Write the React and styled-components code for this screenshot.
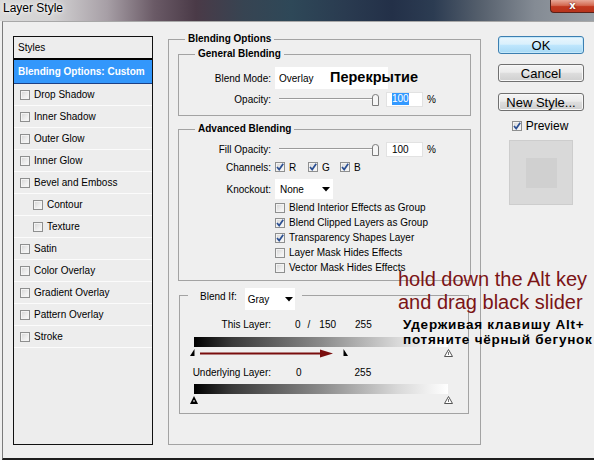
import React from "react";
import styled, { createGlobalStyle } from "styled-components";

const GlobalStyle = createGlobalStyle`
  * { box-sizing: border-box; }
  html, body { margin: 0; padding: 0; background: #efefef; }
  body {
    font-family: "Liberation Sans", Arial, sans-serif;
    font-size: 10px;
    color: #000;
  }
`;

const Window = styled.div`
  position: relative;
  width: 594px;
  height: 460px;
  overflow: hidden;
  display: flex;
  flex-direction: column;
  background: #efefef;
`;

const TitleBar = styled.div`
  flex: none;
  height: 21px;
  display: flex;
  justify-content: space-between;
  align-items: flex-start;
  background: linear-gradient(
    90deg,
    #dadada 0%,
    #d2d1d2 9%,
    #a79fa6 18%,
    #6a5a66 26%,
    #4a3a47 33%,
    #374452 41%,
    #2e4858 49%,
    #2a3b50 58%,
    #233048 66%,
    #2c3c52 73%,
    #56606d 81%,
    #848b94 90%,
    #9aa0a6 100%
  );
`;

const Title = styled.div`
  padding: 1px 0 0 3px;
  font-family: "Liberation Sans", Arial, sans-serif;
  font-size: 12px;
  line-height: 14px;
  color: #000;
  text-shadow: 0 0 6px #fff, 0 0 3px #fff;
`;

const CloseButton = styled.div`
  width: 44px;
  height: 13px;
  display: flex;
  align-items: center;
  justify-content: center;
  border: 1px solid #5a2018;
  border-top: none;
  border-right: none;
  border-bottom-left-radius: 4px;
  background: linear-gradient(180deg, #e7a898 0%, #d46a52 45%, #c2381f 55%, #b8341c 100%);
  color: #fff;
  font-family: "DejaVu Sans", sans-serif;
  font-weight: bold;
  font-size: 10px;
  line-height: 10px;
  text-shadow: 0 0 2px #400;
`;

const Body = styled.div`
  flex: 1;
  display: flex;
  align-items: flex-start;
  margin-left: 2px;
  border-left: 1px solid #7b7b7b;
  border-top: 1px solid #a8a8a8;
  border-bottom: 2px solid #1e1e1e;
  padding: 11px 10px 0 10px;
`;

/* ---------- Left styles list ---------- */

const StylesList = styled.div`
  flex: none;
  margin-top: 3px;
  width: 140px;
  height: 409px;
  border: 1px solid #111;
  background: #ededed;
  display: flex;
  flex-direction: column;
`;

const ListHeader = styled.div`
  height: 23px;
  padding-left: 4px;
  display: flex;
  align-items: center;
  border-bottom: 2px solid #000;
`;

const ListSelected = styled.div`
  height: 24px;
  padding-left: 4px;
  display: flex;
  align-items: center;
  background: #3397fb;
  color: #fff;
  font-weight: bold;
  border-bottom: 1px solid #1c3f84;
`;

const ListRow = styled.div`
  height: 22px;
  display: flex;
  align-items: center;
  gap: 4px;
  padding-left: ${(p) => (p.$indent ? 19 : 6)}px;
  border-bottom: 1px solid #fbfbfb;
`;

/* ---------- Checkbox ---------- */

const Box = styled.span`
  flex: none;
  width: 10px;
  height: 10px;
  display: inline-flex;
  align-items: center;
  justify-content: center;
  border: 1px solid #8e8f8f;
  background: linear-gradient(135deg, #d4d4d4 0%, #eeeeee 60%, #fafafa 100%);
  box-shadow: inset 0 0 0 1px #f3f3f3;
`;

const CheckBox = ({ checked }) => (
  <Box>
    {checked && (
      <svg width="8" height="8" viewBox="0 0 8 8">
        <path d="M1 4 L3.2 6.6 L7.2 0.8" fill="none" stroke="#2b4f92" strokeWidth="1.7" />
      </svg>
    )}
  </Box>
);

/* ---------- Middle groups ---------- */

const MiddleColumn = styled.div`
  flex: none;
  margin-left: 15px;
  width: 313px;
`;

const Fieldset = styled.fieldset`
  margin: ${(p) => p.$margin || "0"};
  padding: ${(p) => p.$pad || "0"};
  min-width: 0;
  height: ${(p) => (p.$h ? p.$h + "px" : "auto")};
  border: 1px solid #a3a3a3;
`;

const Legend = styled.legend`
  margin-left: ${(p) => p.$ml || 16}px;
  padding: 0 3px;
  height: 12px;
  line-height: 12px;
  font-weight: bold;
`;

const BlendIfLegend = styled.legend`
  margin-left: 8px;
  padding: 0 7px 0 12px;
  height: 14px;
  display: flex;
  align-items: flex-start;
  gap: 8px;
`;

const Rows = styled.div`
  display: flex;
  flex-direction: column;
  padding: ${(p) => p.$pad};
`;

const Row = styled.div`
  display: flex;
  align-items: center;
  height: ${(p) => p.$h}px;
  margin-top: ${(p) => p.$mt || 0}px;
`;

const Label = styled.span`
  flex: none;
  width: ${(p) => p.$w || 92}px;
  text-align: right;
  margin-right: 4px;
  white-space: nowrap;
`;

const Select = styled.div`
  position: relative;
  flex: none;
  width: ${(p) => p.$w}px;
  height: ${(p) => p.$h}px;
  background: #fff;
  display: flex;
  align-items: center;
  justify-content: space-between;
  padding: 0 ${(p) => p.$pr || 4}px 0 ${(p) => p.$pl || 4}px;
  font-size: ${(p) => p.$fs || 10}px;
`;

const Arrow = () => (
  <svg width="8" height="5" viewBox="0 0 8 5">
    <path d="M0 0 H8 L4 4.5 Z" fill="#000" />
  </svg>
);

const OverlayNote = styled.span`
  position: absolute;
  left: 55px;
  top: 2px;
  font-family: "Liberation Sans", Arial, sans-serif;
  font-weight: bold;
  font-size: 14.5px;
  line-height: 17px;
  white-space: nowrap;
  color: #000;
`;

const Slider = styled.div`
  position: relative;
  flex: none;
  width: 106px;
  height: 16px;
  &::before {
    content: "";
    position: absolute;
    left: 4px;
    right: 7px;
    top: 7px;
    border-top: 1px solid #9a9a9a;
    border-bottom: 1px solid #fdfdfd;
  }
`;

const Thumb = styled.svg`
  position: absolute;
  left: 97px;
  top: 3px;
`;

const NumberField = styled.div`
  flex: none;
  margin-left: 5px;
  width: 37px;
  height: 15px;
  background: #fff;
  border: 1px solid #e2e2e2;
  padding-left: 5px;
  display: flex;
  align-items: center;
`;

const Selected = styled.span`
  background: #3399ff;
  color: #fff;
  line-height: 12px;
`;

const Percent = styled.span`
  margin-left: 4px;
`;

const ChannelItem = styled.span`
  display: inline-flex;
  align-items: center;
  gap: 4px;
  width: ${(p) => p.$w}px;
`;

const CheckList = styled.div`
  margin-top: 1px;
`;

const CheckRow = styled.div`
  display: flex;
  align-items: center;
  gap: 4px;
  height: 15px;
  padding-left: 96px;
`;

const BlendLabel = styled.span`
  line-height: 18px;
`;

const Value = styled.span`
  margin-left: ${(p) => p.$ml}px;
`;

const GradientBar = styled.div`
  margin-left: 14px;
  margin-top: ${(p) => p.$mt}px;
  width: 254px;
  height: 10px;
  background: linear-gradient(90deg, #000 0%, #3a3a3a 15%, #8a8a8a 50%, #d8d8d8 80%, #fff 100%);
`;

const ThumbTrack = styled.div`
  position: relative;
  margin-left: 14px;
  width: 254px;
  height: 11px;
`;

const SliderThumb = styled.svg`
  position: absolute;
  top: 2px;
  left: ${(p) => p.$left}px;
`;

const RedArrow = styled.svg`
  position: absolute;
  left: 6px;
  top: 2px;
`;

/* ---------- Right column ---------- */

const RightColumn = styled.div`
  flex: none;
  margin-left: 17px;
  margin-top: 3px;
  width: 86px;
  display: flex;
  flex-direction: column;
  align-items: center;
`;

const Button = styled.div`
  width: 86px;
  height: 18px;
  margin-top: ${(p) => p.$mt || 0}px;
  display: flex;
  align-items: center;
  justify-content: center;
  border-radius: 3px;
  font-family: "Liberation Sans", Arial, sans-serif;
  font-size: 13px;
  border: 1px solid ${(p) => (p.$default ? "#3c7fb1" : "#707070")};
  background: ${(p) =>
    p.$default
      ? "linear-gradient(180deg, #eaf6fd 0%, #d9f0fc 45%, #bee6fd 52%, #a7d9f5 100%)"
      : "linear-gradient(180deg, #f4f4f4 0%, #ebebeb 45%, #dddddd 52%, #cfcfcf 100%)"};
  box-shadow: inset 0 0 0 1px ${(p) => (p.$default ? "#c4e8fa" : "#f8f8f8")};
`;

const PreviewRow = styled.div`
  margin-top: 8px;
  height: 14px;
  display: flex;
  align-items: center;
  gap: 4px;
  font-size: 12px;
  margin-left: -2px;
`;

const PreviewBox = styled.div`
  margin-top: 7px;
  width: 64px;
  height: 65px;
  background: #d9d9d9;
  border: 1px solid #cdcdcd;
  display: flex;
  align-items: center;
  justify-content: center;
`;

const PreviewInner = styled.div`
  width: 31px;
  height: 30px;
  background: #d0d0d0;
`;

/* ---------- Annotation overlay ---------- */

const Annotation = styled.div`
  position: absolute;
  left: 398px;
  top: 268px;
  pointer-events: none;
`;

const RedNote = styled.div`
  font-family: "Liberation Sans", Arial, sans-serif;
  font-size: 20px;
  line-height: 23px;
  color: #7b1416;
  white-space: nowrap;
`;

const BlackNote = styled.div`
  margin: 3px 0 0 5px;
  font-family: "Liberation Sans", Arial, sans-serif;
  font-weight: bold;
  font-size: 13.5px;
  line-height: 15px;
  letter-spacing: 0.75px;
  color: #000;
  white-space: nowrap;
`;

/* ---------- Data ---------- */

const styleItems = [
  { name: "Drop Shadow" },
  { name: "Inner Shadow" },
  { name: "Outer Glow" },
  { name: "Inner Glow" },
  { name: "Bevel and Emboss" },
  { name: "Contour", indent: true },
  { name: "Texture", indent: true },
  { name: "Satin" },
  { name: "Color Overlay" },
  { name: "Gradient Overlay" },
  { name: "Pattern Overlay" },
  { name: "Stroke" },
];

const advancedChecks = [
  { label: "Blend Interior Effects as Group", checked: false },
  { label: "Blend Clipped Layers as Group", checked: true },
  { label: "Transparency Shapes Layer", checked: true },
  { label: "Layer Mask Hides Effects", checked: false },
  { label: "Vector Mask Hides Effects", checked: false },
];

const OpacityThumb = () => (
  <Thumb width="7" height="12" viewBox="0 0 7 12">
    <path d="M0.5 3 Q0.5 0.5 3.5 0.5 Q6.5 0.5 6.5 3 V11.5 H0.5 Z" fill="#f6f6f6" stroke="#7c7c7c" />
  </Thumb>
);

const HalfLeft = ({ left }) => (
  <SliderThumb $left={left} width="5" height="7" viewBox="0 0 5 7">
    <path d="M4.5 0 V7 H0 Z" fill="#000" />
  </SliderThumb>
);

const HalfRight = ({ left }) => (
  <SliderThumb $left={left} width="5" height="7" viewBox="0 0 5 7">
    <path d="M0.5 0 V7 H5 Z" fill="#000" />
  </SliderThumb>
);

const WhiteThumb = ({ left }) => (
  <SliderThumb $left={left} width="9" height="8" viewBox="0 0 9 8">
    <path d="M4.5 0.5 L8.5 7.5 H0.5 Z" fill="#fff" stroke="#555" />
    <path d="M4.5 3 V6" stroke="#777" />
  </SliderThumb>
);

const BlackThumb = ({ left }) => (
  <SliderThumb $left={left} width="8" height="8" viewBox="0 0 8 8">
    <path d="M4 0 L8 8 H0 Z" fill="#000" />
    <path d="M4 4 V6" stroke="#fff" />
  </SliderThumb>
);

export default function App() {
  return (
    <>
      <GlobalStyle />
      <Window>
        <TitleBar>
          <Title>Layer Style</Title>
          <CloseButton>x</CloseButton>
        </TitleBar>
        <Body>
          <StylesList>
            <ListHeader>Styles</ListHeader>
            <ListSelected>Blending Options: Custom</ListSelected>
            {styleItems.map((s) => (
              <ListRow key={s.name} $indent={s.indent}>
                <CheckBox />
                <span>{s.name}</span>
              </ListRow>
            ))}
          </StylesList>

          <MiddleColumn>
            <Fieldset $h={412} $pad="3px 9px 0 9px">
              <Legend $ml={7}>Blending Options</Legend>

              <Fieldset>
                <Legend>General Blending</Legend>
                <Rows $pad="7px 0 8px 0">
                  <Row $h={22}>
                    <Label>Blend Mode:</Label>
                    <Select $w={113} $h={22}>
                      <span>Overlay</span>
                      <OverlayNote>Перекрытие</OverlayNote>
                    </Select>
                  </Row>
                  <Row $h={16} $mt={2}>
                    <Label>Opacity:</Label>
                    <Slider>
                      <OpacityThumb />
                    </Slider>
                    <NumberField>
                      <Selected>100</Selected>
                    </NumberField>
                    <Percent>%</Percent>
                  </Row>
                </Rows>
              </Fieldset>

              <Fieldset $margin="7px 0 0 0">
                <Legend>Advanced Blending</Legend>
                <Rows $pad="6px 0 5px 0">
                  <Row $h={16}>
                    <Label>Fill Opacity:</Label>
                    <Slider>
                      <OpacityThumb />
                    </Slider>
                    <NumberField>100</NumberField>
                    <Percent>%</Percent>
                  </Row>
                  <Row $h={16} $mt={2}>
                    <Label>Channels:</Label>
                    <ChannelItem $w={33}>
                      <CheckBox checked />R
                    </ChannelItem>
                    <ChannelItem $w={32}>
                      <CheckBox checked />G
                    </ChannelItem>
                    <ChannelItem $w={20}>
                      <CheckBox checked />B
                    </ChannelItem>
                  </Row>
                  <Row $h={20} $mt={4}>
                    <Label>Knockout:</Label>
                    <Select $w={58} $h={20} $pl={5} $pr={3}>
                      <span>None</span>
                      <Arrow />
                    </Select>
                  </Row>
                  <CheckList>
                    {advancedChecks.map((c) => (
                      <CheckRow key={c.label}>
                        <CheckBox checked={c.checked} />
                        <span>{c.label}</span>
                      </CheckRow>
                    ))}
                  </CheckList>
                </Rows>
              </Fieldset>

              <Fieldset $margin="7px 2px 0 1px">
                <BlendIfLegend>
                  <BlendLabel>Blend If:</BlendLabel>
                  <Select $w={50} $h={22} $pl={3} $pr={2}>
                    <span>Gray</span>
                    <Arrow />
                  </Select>
                </BlendIfLegend>
                <Rows $pad="15px 0 8px 0">
                  <Row $h={14}>
                    <Label $w={91}>This Layer:</Label>
                    <Value $ml={20}>0</Value>
                    <Value $ml={7}>/</Value>
                    <Value $ml={9}>150</Value>
                    <Value $ml={19}>255</Value>
                  </Row>
                  <GradientBar $mt={6} />
                  <ThumbTrack>
                    <HalfLeft left={-4} />
                    <RedArrow width="135" height="9" viewBox="0 0 135 9">
                      <path d="M0 4.5 H124" stroke="#7a0e0e" strokeWidth="2" />
                      <path d="M120 0.5 L133 4.5 L120 8.5 Z" fill="#7a0e0e" />
                    </RedArrow>
                    <HalfRight left={149} />
                    <WhiteThumb left={250} />
                  </ThumbTrack>
                  <Row $h={14} $mt={7}>
                    <Label $w={91}>Underlying Layer:</Label>
                    <Value $ml={21}>0</Value>
                    <Value $ml={53}>255</Value>
                  </Row>
                  <GradientBar $mt={5} />
                  <ThumbTrack>
                    <BlackThumb left={-4} />
                    <WhiteThumb left={250} />
                  </ThumbTrack>
                </Rows>
              </Fieldset>
            </Fieldset>
          </MiddleColumn>

          <RightColumn>
            <Button $default>OK</Button>
            <Button $mt={10}>Cancel</Button>
            <Button $mt={11}>New Style...</Button>
            <PreviewRow>
              <CheckBox checked />
              <span>Preview</span>
            </PreviewRow>
            <PreviewBox>
              <PreviewInner />
            </PreviewBox>
          </RightColumn>
        </Body>

        <Annotation>
          <RedNote>
            hold down the Alt key
            <br />
            and drag black slider
          </RedNote>
          <BlackNote>
            Удерживая клавишу Alt+
            <br />
            потяните чёрный бегунок
          </BlackNote>
        </Annotation>
      </Window>
    </>
  );
}
